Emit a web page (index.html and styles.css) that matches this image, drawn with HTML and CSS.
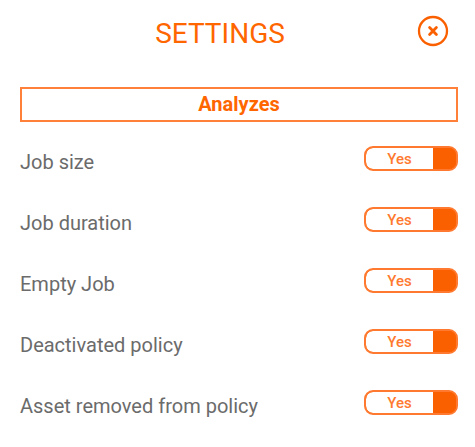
FILE: index.html
```html
<!DOCTYPE html>
<html lang="en">
<head>
    <meta charset="UTF-8">
    <meta name="viewport" content="width=device-width, initial-scale=1.0">
    <title>Settings</title>
    <link rel="stylesheet" href="styles.css">
</head>

<body>
    <form class="settings">
        <div class="header">
            <h1 class="title">SETTINGS</h1>
            <button type="button" class="close" aria-label="Close">
                <svg viewBox="0 0 32 32" width="32" height="32" fill="none" stroke="currentColor">
                    <circle cx="16" cy="16" r="14" stroke-width="2.3"/>
                    <path d="M12.6 12.6l6.8 6.8M19.4 12.6l-6.8 6.8" stroke-width="2.8" stroke-linecap="round"/>
                </svg>
            </button>
        </div>

        <h2 class="section">Analyzes</h2>

        <div class="row">
            <label for="job-size">Job size</label>
            <div class="switch">
                <span class="value">Yes</span>
                <input type="checkbox" id="job-size" name="job-size" checked>
            </div>
        </div>
        <div class="row">
            <label for="job-duration">Job duration</label>
            <div class="switch">
                <span class="value">Yes</span>
                <input type="checkbox" id="job-duration" name="job-duration" checked>
            </div>
        </div>
        <div class="row">
            <label for="empty-job">Empty Job</label>
            <div class="switch">
                <span class="value">Yes</span>
                <input type="checkbox" id="empty-job" name="empty-job" checked>
            </div>
        </div>
        <div class="row">
            <label for="deactivated-policy">Deactivated policy</label>
            <div class="switch">
                <span class="value">Yes</span>
                <input type="checkbox" id="deactivated-policy" name="deactivated-policy" checked>
            </div>
        </div>
        <div class="row">
            <label for="asset-removed">Asset removed from policy</label>
            <div class="switch">
                <span class="value">Yes</span>
                <input type="checkbox" id="asset-removed" name="asset-removed" checked>
            </div>
        </div>
    </form>
</body>

</html>
```

FILE: styles.css
```css
body {
    font-family: Roboto, Arial, sans-serif;
    margin: 0;
    background-color: #fff;
    color: #6b6b6b;
}

.settings {
    padding: 15px 17px 0 20px;
}

.header {
    display: flex;
    align-items: flex-start;
    padding-right: 9px;
    margin-bottom: 34px;
}

.title {
    flex: 1;
    margin: 0;
    padding-left: 3px;
    font-size: 28px;
    font-weight: 400;
    line-height: 38px;
    text-align: center;
    color: #ff6600;
}

.close {
    width: 32px;
    height: 32px;
    padding: 0;
    border: none;
    background: none;
    color: #fa6000;
    cursor: pointer;
}

.close svg {
    display: block;
}

.section {
    margin: 0 0 24px;
    border: 2px solid #ff8038;
    font-size: 20px;
    font-weight: 700;
    line-height: 31px;
    text-align: center;
    color: #ff6600;
}

.row {
    display: flex;
    justify-content: space-between;
    align-items: flex-start;
    margin-bottom: 29px;
    font-size: 20px;
    line-height: 32px;
}

/* Yes/No switch */
.switch {
    display: flex;
    box-sizing: border-box;
    width: 94px;
    height: 25px;
    border: 2px solid #ff7a30;
    border-radius: 9px;
    background-color: #fa6000;
    overflow: hidden;
}

.value {
    flex: 1;
    border-radius: 7px 0 0 7px;
    background-color: #fff;
    font-size: 15px;
    font-weight: 500;
    line-height: 23px;
    text-align: center;
    color: #ff7a30;
}

.switch input {
    appearance: none;
    width: 23px;
    margin: 0;
    background-color: #fa6000;
    cursor: pointer;
}
```
